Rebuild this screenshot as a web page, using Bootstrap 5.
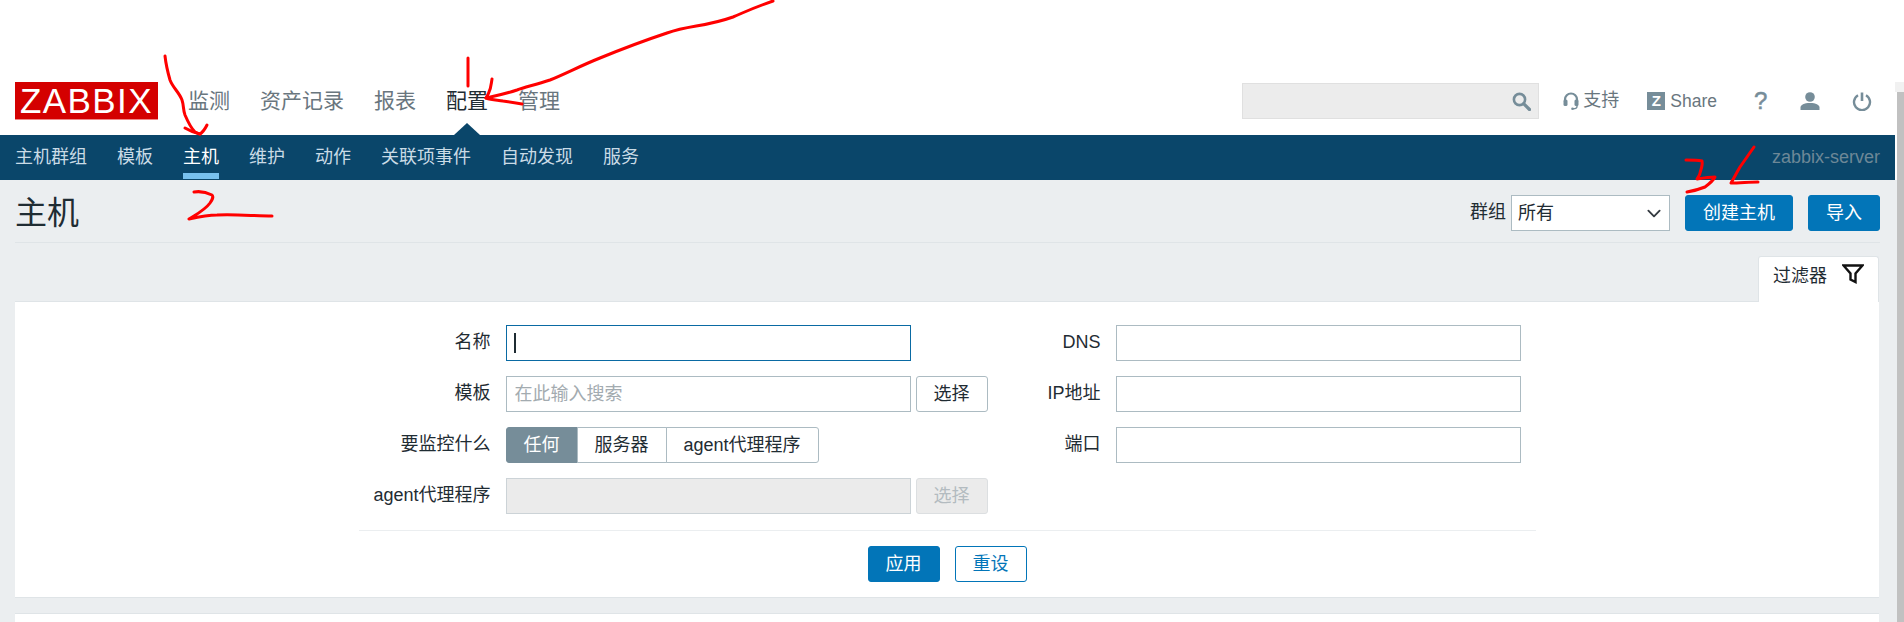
<!DOCTYPE html>
<html lang="zh-CN">
<head>
<meta charset="utf-8">
<title>主机</title>
<link href="https://cdn.jsdelivr.net/npm/bootstrap@5.3.0/dist/css/bootstrap.min.css" rel="stylesheet">
<style>
html,body{height:622px;overflow:hidden}
body{background:#fff;font-family:"Liberation Sans","Noto Sans CJK SC",sans-serif;font-size:18px;line-height:1.2;color:#1f2c33;position:relative}
.page-shell{width:1897px;height:622px}
.scroll-strip{position:absolute;right:0;top:82px;bottom:0;width:7px;background:#c1c1c1}
.scroll-strip::before{content:"";position:absolute;left:-2px;right:0;top:0;height:10px;background:#f1f1f1}
.top-head{height:135px;padding:82px 23px 15px 15px;width:1895px}
.zbx-logo{width:143px;height:38px;background:#d40000;color:#fff;font-size:35px;line-height:38px;text-align:center;letter-spacing:1.4px;border-bottom:1px solid #e88}
.main-menu{margin-left:30px;gap:30px;font-size:21px;color:#69767e}
.main-menu .cur{color:#1f2c33;position:relative}
.main-menu .cur::after{content:"";position:absolute;left:50%;bottom:-21px;margin-left:-13px;border-left:13px solid transparent;border-right:13px solid transparent;border-bottom:12px solid #0a466a}
.search-box{width:297px;height:36px;background:#ececec;border:1px solid #e0e0e0;padding-right:7px}
.tool-row{color:#69767e;font-size:18px}
.tool-gap1{margin-left:24px}.tool-gap2{margin-left:28px}.tool-gap3{margin-left:37px}.tool-gap4{margin-left:36px}.tool-gap5{margin-left:32px}
.z-box{width:18px;height:18px;background:#768d99;color:#fff;font-size:15px;font-weight:700;line-height:18px;text-align:center;margin-right:5px}
.share-txt{font-size:17.5px}
.help-mark{font-size:24px;line-height:24px;width:10px;text-align:center;font-weight:400;color:#768d99;-webkit-text-stroke:.5px #768d99}
.sub-bar{width:1895px;height:45px;background:#0a466a;padding:0 15px;color:#c9dbe6}
.sub-menu{gap:30px}
.sub-item{height:44px;padding-top:6px;border-bottom:6px solid transparent;line-height:32px}
.sub-item.cur{color:#fff;border-bottom-color:#78c1ee}
.server-name{color:#6d8897;line-height:44px}
.content-zone{background:#ebeef0;height:442px;padding:0 18px 0 15px}
.title-row{height:63px;padding-top:15px;padding-bottom:11px;border-bottom:1px solid #dfe4e7;margin-right:-1px}
.page-h{font-size:32px;font-weight:400;margin:0;line-height:36px;color:#1f2c33}
.grp-sel{width:159px;height:36px;border-radius:0;border:1px solid #acbbc2;font-size:18px;padding:0 20px 0 6px;color:#1f2c33;margin-left:5px;background-position:right 5px center;background-size:20px 15px;font-family:inherit}
.z-btn{height:36px;font-size:18px;line-height:34px;padding:0 17px;border-radius:3px;background:#0275b8;border:1px solid #0275b8;color:#fff;margin-left:15px}
.z-btn:hover{background:#0275b8;color:#fff}
.tab-row{margin-top:13px;height:46px;margin-bottom:-1px;position:relative;z-index:1}
.filter-tab{width:121px;height:46px;background:#fff;border:1px solid #dfe4e7;border-bottom:0;border-radius:3px 3px 0 0;padding:5px 14px 0 14px;box-shadow:0 1px 0 #fff}
.filter-label{margin-top:4px}
.filter-icon{margin-top:2px}
.form-pane{background:#fff;border:1px solid #dfe4e7;border-width:1px 0 1px 0;height:297px;padding-top:23px}
.form-wrap{width:1177px;margin:0 auto}
.left-side{width:630px}
.right-side{width:547px}
.form-line{height:36px;margin-bottom:15px}
.lab-l{width:132px;text-align:right;margin-right:15px;flex:none}
.lab-r{width:112px;text-align:right;margin-right:15px;flex:none}
.z-input{width:405px;height:36px;border-radius:0;border:1px solid #acbbc2;font-size:18px;padding:0 8px;color:#1f2c33;font-family:inherit;flex:none}
.z-input::placeholder{color:#a3abb0}
.z-input:disabled{background:#ebebeb;border-color:#ccd3d7}
.z-input.active-input{border-color:#0a6aa3}
.caret-wrap{position:relative}
.caret-bar{position:absolute;left:8px;top:8px;width:2px;height:20px;background:#1f2c33}
.pick-btn{width:72px;height:36px;margin-left:5px;font-size:18px;line-height:34px;padding:0;background:#fff;border:1px solid #acbbc2;border-radius:3px;color:#1f2c33}
.pick-btn:disabled{background:#ebebeb;border-color:#dcdfe1;color:#b3bbc0;opacity:1}
.seg-btn{height:36px;font-size:18px;line-height:34px;padding:0 17px;background:#fff;border:1px solid #acbbc2;color:#1f2c33;border-radius:3px}
.seg-btn.cur{background:#768d99;border-color:#768d99;color:#fff}
.btn-group .seg-btn:hover{background:#fff;color:#1f2c33}
.btn-group .seg-btn.cur:hover{background:#768d99;color:#fff}
.foot-line{border-top:1px solid #ebeef0;margin-top:1px;padding-top:15px;gap:15px}
.foot-line .z-btn{margin:0;width:72px;padding:0;text-align:center}
.z-btn.ghost{background:#fff;color:#0275b8}
.z-btn.ghost:hover{background:#fff;color:#0275b8}
.next-pane{background:#fff;border-top:1px solid #dfe4e7;height:20px;margin-top:15px}
.ink-layer{position:absolute;left:0;top:0;width:1904px;height:622px;pointer-events:none;z-index:5}
.ink-layer path{fill:none;stroke:#f00;stroke-width:3;stroke-linecap:round;stroke-linejoin:round}
</style>
</head>
<body>
<div class="page-shell">
  <header class="top-head d-flex align-items-center">
    <div class="zbx-logo flex-none">ZABBIX</div>
    <nav class="main-menu d-flex">
      <span>监测</span><span>资产记录</span><span>报表</span><span class="cur">配置</span><span>管理</span>
    </nav>
    <div class="tool-row d-flex align-items-center ms-auto">
      <div class="search-box d-flex align-items-center justify-content-end">
        <svg width="19" height="19" viewBox="0 0 19 19"><circle cx="7.5" cy="7.5" r="5.6" fill="none" stroke="#768d99" stroke-width="2.6"/><path d="M11.8 11.8 17.5 17.5" stroke="#768d99" stroke-width="3.2" stroke-linecap="round"/></svg>
      </div>
      <div class="d-flex align-items-center tool-gap1">
        <svg width="16" height="18" viewBox="0 0 16 18" class="me-1"><path d="M2 10V7.5a6 6 0 0 1 12 0V10" fill="none" stroke="#768d99" stroke-width="2.2"/><rect x="0.5" y="7.5" width="4" height="6.5" rx="1.5" fill="#768d99"/><rect x="11.5" y="7.5" width="4" height="6.5" rx="1.5" fill="#768d99"/><path d="M14 13v1.5c0 1.3-1.5 2.3-4 2.3" fill="none" stroke="#768d99" stroke-width="1.4"/><circle cx="9.5" cy="16.7" r="1.3" fill="#768d99"/></svg>
        <span>支持</span>
      </div>
      <div class="d-flex align-items-center tool-gap2">
        <span class="z-box">Z</span><span class="share-txt">Share</span>
      </div>
      <span class="help-mark tool-gap3">?</span>
      <svg class="tool-gap4" width="20" height="18" viewBox="0 0 20 18"><circle cx="10" cy="5" r="4.8" fill="#768d99"/><path d="M0.5 18v-2.5c0-2.6 3.6-4.5 9.5-4.5s9.5 1.9 9.5 4.5V18z" fill="#768d99"/></svg>
      <svg class="tool-gap5" width="20" height="19" viewBox="0 0 20 19"><path d="M6 3.2a8 8 0 1 0 8 0" fill="none" stroke="#768d99" stroke-width="2.4"/><path d="M10 0.5v8.5" stroke="#768d99" stroke-width="2.6"/></svg>
    </div>
  </header>

  <div class="sub-bar d-flex justify-content-between">
    <nav class="sub-menu d-flex">
      <span class="sub-item">主机群组</span><span class="sub-item">模板</span><span class="sub-item cur">主机</span><span class="sub-item">维护</span><span class="sub-item">动作</span><span class="sub-item">关联项事件</span><span class="sub-item">自动发现</span><span class="sub-item">服务</span>
    </nav>
    <span class="server-name">zabbix-server</span>
  </div>

  <main class="content-zone">
    <div class="title-row d-flex align-items-center justify-content-between">
      <h1 class="page-h">主机</h1>
      <div class="d-flex align-items-center">
        <span>群组</span>
        <select class="form-select grp-sel"><option>所有</option></select>
        <button type="button" class="btn z-btn">创建主机</button>
        <button type="button" class="btn z-btn">导入</button>
      </div>
    </div>
    <div class="tab-row d-flex justify-content-end">
      <div class="filter-tab d-flex align-items-start justify-content-between">
        <span class="filter-label">过滤器</span>
        <svg class="filter-icon" width="22" height="20" viewBox="0 0 22 20"><path d="M1.5 1.5h19l-7 8v8.5l-5-2.5v-6z" fill="none" stroke="#111" stroke-width="2.4" stroke-linejoin="miter"/></svg>
      </div>
    </div>
    <section class="form-pane">
      <div class="form-wrap">
        <div class="d-flex justify-content-between">
          <div class="left-side">
            <div class="form-line d-flex align-items-center">
              <label class="lab-l">名称</label>
              <div class="caret-wrap"><input type="text" class="form-control z-input active-input"><span class="caret-bar"></span></div>
            </div>
            <div class="form-line d-flex align-items-center">
              <label class="lab-l">模板</label>
              <input type="text" class="form-control z-input" placeholder="在此输入搜索">
              <button type="button" class="btn pick-btn">选择</button>
            </div>
            <div class="form-line d-flex align-items-center">
              <label class="lab-l">要监控什么</label>
              <div class="btn-group">
                <button type="button" class="btn seg-btn cur">任何</button>
                <button type="button" class="btn seg-btn">服务器</button>
                <button type="button" class="btn seg-btn">agent代理程序</button>
              </div>
            </div>
            <div class="form-line d-flex align-items-center">
              <label class="lab-l">agent代理程序</label>
              <input type="text" class="form-control z-input" disabled>
              <button type="button" class="btn pick-btn" disabled>选择</button>
            </div>
          </div>
          <div class="right-side">
            <div class="form-line d-flex align-items-center">
              <label class="lab-r">DNS</label>
              <input type="text" class="form-control z-input">
            </div>
            <div class="form-line d-flex align-items-center">
              <label class="lab-r">IP地址</label>
              <input type="text" class="form-control z-input">
            </div>
            <div class="form-line d-flex align-items-center">
              <label class="lab-r">端口</label>
              <input type="text" class="form-control z-input">
            </div>
          </div>
        </div>
        <div class="foot-line d-flex justify-content-center">
          <button type="button" class="btn z-btn">应用</button>
          <button type="button" class="btn z-btn ghost">重设</button>
        </div>
      </div>
    </section>
    <div class="next-pane"></div>
  </main>
</div>
<div class="scroll-strip"></div>
<svg class="ink-layer" viewBox="0 0 1904 622">
  <path d="M773 1C750 9 745 12 733 17C705 27 690 25 667 33C640 42 622 49 600 58C580 66 565 74 550 80C535 85 525 87 517 90C505 94 495 96 486 98"/>
  <path d="M492 79C491 85 491 88 489 92C488 95 487 96 486 98C492 100 498 100 503 101C510 102 516 103 522 104"/>
  <path d="M468 58V86"/>
  <path d="M165 56C166 65 168 73 170 80C173 88 179 92 182 100C184 106 183 110 185 115C188 122 191 128 195 132C197 133 198 134 200 134"/>
  <path d="M185 128C190 131 195 133 200 134C203 132 205 129 207 125"/>
  <path d="M194 192C200 191 206 192 212 195C214 197 212 200 210 203C205 210 197 214 189 219C198 217 207 215 217 215C235 214 255 216 272 216"/>
  <path d="M1686 160C1692 160 1697 160 1702 161C1703 165 1701 169 1700 173C1700 175 1698 177 1697 179C1703 178 1709 177 1715 177C1713 181 1709 184 1705 187C1700 189 1693 191 1687 192"/>
  <path d="M1754 147C1749 154 1745 160 1740 167C1737 172 1734 178 1731 183C1740 183 1749 182 1758 182"/>
</svg>
</body>
</html>
